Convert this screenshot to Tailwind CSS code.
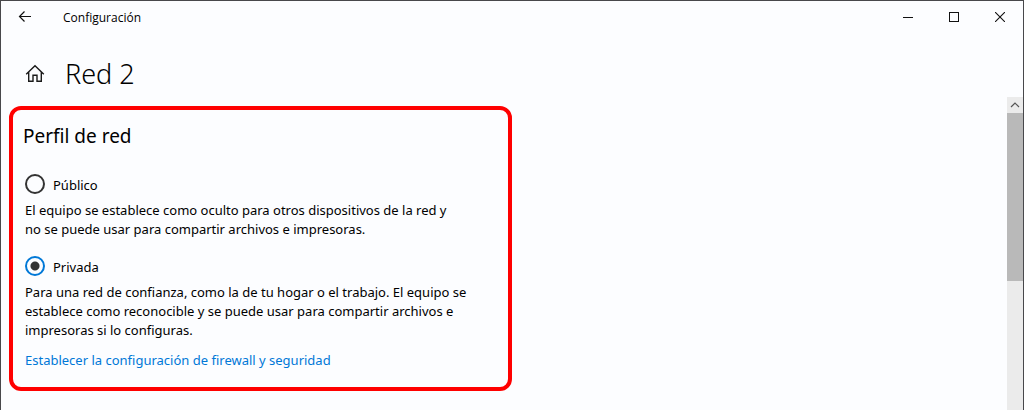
<!DOCTYPE html>
<html lang="es">
<head>
<meta charset="utf-8">
<meta name="viewport" content="width=device-width, initial-scale=1">
<title>Configuración</title>
<script src="https://cdn.jsdelivr.net/npm/@tailwindcss/browser@4"></script>
</head>
<body class="flex h-screen flex-col overflow-hidden border-x border-t border-[#48484b] bg-[#fcfdff] font-['Noto_Sans','Open_Sans',sans-serif] text-[13px] text-black">
  <header class="flex h-8 shrink-0 items-center">
    <button type="button" aria-label="Atrás" class="flex h-8 w-12 items-center justify-center">
      <svg class="size-4" viewBox="0 0 16 16" fill="none" stroke="#111" stroke-width="1.2"><path d="M14 7.500H2.500M7.500 2.500l-5 5 5 5"/></svg>
    </button>
    <span class="ml-3.5 pt-0.5 font-['Open_Sans','Noto_Sans',sans-serif] text-xs">Configuración</span>
    <div class="ml-auto flex">
      <button type="button" aria-label="Minimizar" class="flex h-8 w-[46px] items-center justify-center">
        <svg class="size-2.5" viewBox="0 0 10 10" fill="none" stroke="#111" shape-rendering="crispEdges"><path d="M0 5.5h10"/></svg>
      </button>
      <button type="button" aria-label="Maximizar" class="flex h-8 w-[46px] items-center justify-center">
        <svg class="size-2.5" viewBox="0 0 10 10" fill="none" stroke="#111" shape-rendering="crispEdges"><path d="M.5 .5h9v9h-9z"/></svg>
      </button>
      <button type="button" aria-label="Cerrar" class="flex h-8 w-[46px] items-center justify-center">
        <svg class="size-2.5" viewBox="0 0 10 10" fill="none" stroke="#111" stroke-width="1.1"><path d="M0 0l10 10M10 0L0 10"/></svg>
      </button>
    </div>
  </header>

  <div class="flex h-16 shrink-0 items-center gap-5 pt-[18px] pl-6">
    <a href="#inicio" aria-label="Inicio" class="block">
      <svg class="size-5" viewBox="0 0 20 20" fill="none" stroke="#1a1a1a" stroke-width="1.4"><path d="M1.200 10.200L10 1.800l8.800 8.400M3.700 8.200v9.100h4.300v-6h4v6h4.300V8.200"/></svg>
    </a>
    <h1 class="text-[27px] leading-9 font-light">Red 2</h1>
  </div>

  <div class="flex min-h-0 flex-1">
    <main class="min-w-0 flex-1 pt-[9px] pl-2">
      <section class="w-full max-w-[503px] rounded-xl border-4 border-[#ff0000] px-3 pt-3 pb-4">
        <h2 class="-ml-0.5 text-[19px] leading-7">Perfil de red</h2>
        <form>
          <div class="mt-6 flex items-center gap-2">
            <input id="publico" type="radio" name="perfil" class="size-5 appearance-none rounded-full border-2 border-[#333]">
            <label for="publico" class="pt-0.5 leading-[18px]">Público</label>
          </div>
          <p class="mt-[7px] leading-[19px]">El equipo se establece como oculto para otros dispositivos de la red y<br>no se puede usar para compartir archivos e impresoras.</p>
          <div class="mt-[17px] flex items-center gap-2">
            <input id="privada" type="radio" name="perfil" checked class="size-5 appearance-none rounded-full border-2 border-[#333] checked:border-[#0078d7] checked:bg-[radial-gradient(circle,#333_4px,transparent_5px)]">
            <label for="privada" class="pt-0.5 leading-[18px]">Privada</label>
          </div>
          <p class="mt-[7px] leading-[19px]">Para una red de confianza, como la de tu hogar o el trabajo. El equipo se<br>establece como reconocible y se puede usar para compartir archivos e<br>impresoras si lo configuras.</p>
        </form>
        <a href="#firewall" class="mt-2.5 inline-block leading-5 text-[#0078d7]">Establecer la configuración de firewall y seguridad</a>
      </section>
    </main>
    <div class="flex w-4 shrink-0 flex-col bg-[#ebebeb]">
      <button type="button" aria-label="Desplazar hacia arriba" class="flex size-4 items-center justify-center">
        <svg class="size-2.5" viewBox="0 0 10 10" fill="none" stroke="#555" stroke-width="1.2"><path d="M1 7l4-4 4 4"/></svg>
      </button>
      <div class="h-[168px] bg-[#b9b9b9]"></div>
    </div>
  </div>
</body>
</html>
